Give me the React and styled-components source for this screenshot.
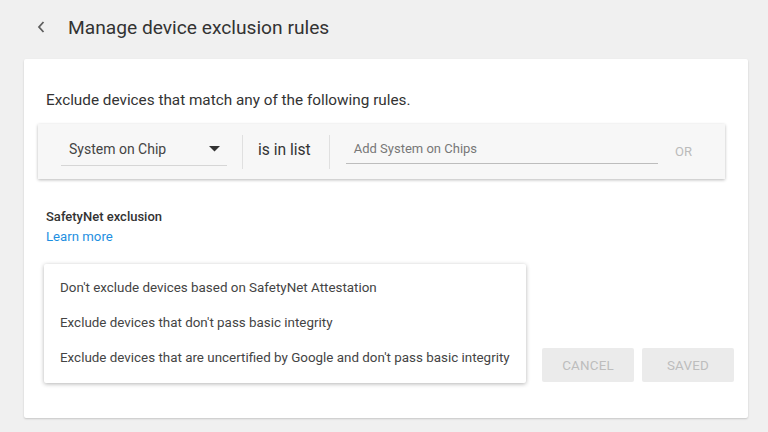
import React from 'react';
import styled, { createGlobalStyle } from 'styled-components';

const GlobalStyle = createGlobalStyle`
  html, body {
    margin: 0;
    padding: 0;
    background: #f0f0f0;
    font-family: Roboto, "Liberation Sans", Arial, sans-serif;
  }
`;

const Page = styled.div`
  width: 768px;
  height: 432px;
  overflow: hidden;
  background: #f0f0f0;
`;

const Header = styled.div`
  display: flex;
  align-items: center;
  height: 54px;
  padding-left: 33px;
`;

const BackButton = styled.button`
  display: flex;
  align-items: center;
  justify-content: center;
  width: 16px;
  height: 20px;
  padding: 0;
  margin: 0 19px 0 0;
  border: none;
  background: transparent;
  color: #555;
`;

const Title = styled.h1`
  margin: 0;
  font-size: 19.2px;
  font-weight: 400;
  color: #333;
`;

const Card = styled.div`
  margin: 5px 20px 0 24px;
  height: 359px;
  background: #fff;
  border-radius: 2px;
  box-shadow: 0 1px 2px rgba(0, 0, 0, 0.18);
  padding: 31px 14px 0 14px;
  box-sizing: border-box;
  display: flex;
  flex-direction: column;
`;

const Intro = styled.p`
  margin: 0 0 14px 8px;
  font-size: 15.3px;
  line-height: 20px;
  color: #333;
`;

const RulePanel = styled.div`
  display: flex;
  align-items: center;
  height: 55px;
  margin-right: 9px;
  background: #f7f7f7;
  box-shadow: 0 1px 3px rgba(0, 0, 0, 0.28);
  padding: 0 33px 0 23px;
`;

const Select = styled.div`
  display: flex;
  align-items: center;
  justify-content: space-between;
  width: 166px;
  height: 33px;
  box-sizing: border-box;
  padding: 0 7px 0 8px;
  margin-bottom: 4px;
  border-bottom: 1px solid #d6d6d6;
  font-size: 14px;
  color: #444;
`;

const Divider = styled.div`
  width: 1px;
  height: 34px;
  margin: 0 15px;
  background: #e0e0e0;
`;

const Operator = styled.span`
  margin: 0 3px 3px 0;
  font-size: 15.6px;
  color: #333;
`;

const Input = styled.div`
  flex: 1;
  height: 31px;
  box-sizing: border-box;
  margin: 0 0 6px 1px;
  padding: 0 8px;
  display: flex;
  align-items: center;
  border-bottom: 1px solid #bdbdbd;
  font-size: 13px;
  color: #777;
`;

const OrLabel = styled.span`
  margin-left: 17px;
  font-size: 13px;
  color: #bbb;
`;

const SectionTitle = styled.div`
  margin: 30px 0 0 8px;
  font-size: 13px;
  line-height: 16px;
  font-weight: 500;
  color: #333;
`;

const Link = styled.a`
  align-self: flex-start;
  margin: 4px 0 0 8px;
  font-size: 13.2px;
  line-height: 16px;
  color: #1e8fe1;
  text-decoration: none;
`;

const Footer = styled.div`
  display: flex;
  align-items: flex-end;
  margin-top: 19px;
`;

const Menu = styled.ul`
  list-style: none;
  margin: 0 0 0 6px;
  padding: 6px 0;
  width: 482px;
  height: 119px;
  box-sizing: border-box;
  background: #fff;
  border-radius: 2px;
  box-shadow: 0 1px 4px rgba(0, 0, 0, 0.3);
`;

const MenuItem = styled.li`
  height: 35px;
  line-height: 35px;
  padding-left: 16px;
  font-size: 13.4px;
  color: #444;
  white-space: nowrap;
`;

const Buttons = styled.div`
  display: flex;
  gap: 8px;
  margin-left: auto;
  margin-bottom: 1px;
`;

const Button = styled.button`
  width: 92px;
  height: 34px;
  border: none;
  border-radius: 2px;
  background: #ebebeb;
  color: #bdbdbd;
  font-family: inherit;
  font-size: 13.4px;
  letter-spacing: 0.2px;
`;

const Chevron = () => (
  <svg width="10" height="14" viewBox="0 0 10 14">
    <path d="M7.5 2 L3 7 L7.5 12" fill="none" stroke="#5f5f5f" strokeWidth="1.8" />
  </svg>
);

const Caret = () => (
  <svg width="11" height="6" viewBox="0 0 11 6">
    <path d="M0 0 L11 0 L5.5 5.5 Z" fill="#333" />
  </svg>
);

const options = [
  "Don't exclude devices based on SafetyNet Attestation",
  "Exclude devices that don't pass basic integrity",
  "Exclude devices that are uncertified by Google and don't pass basic integrity",
];

export default function App() {
  return (
    <Page>
      <GlobalStyle />
      <Header>
        <BackButton aria-label="Back">
          <Chevron />
        </BackButton>
        <Title>Manage device exclusion rules</Title>
      </Header>
      <Card>
        <Intro>Exclude devices that match any of the following rules.</Intro>
        <RulePanel>
          <Select>
            <span>System on Chip</span>
            <Caret />
          </Select>
          <Divider />
          <Operator>is in list</Operator>
          <Divider />
          <Input>Add System on Chips</Input>
          <OrLabel>OR</OrLabel>
        </RulePanel>
        <SectionTitle>SafetyNet exclusion</SectionTitle>
        <Link href="#">Learn more</Link>
        <Footer>
          <Menu>
            {options.map((o, i) => (
              <MenuItem key={`opt-${i}`}>{o}</MenuItem>
            ))}
          </Menu>
          <Buttons>
            <Button disabled>CANCEL</Button>
            <Button disabled>SAVED</Button>
          </Buttons>
        </Footer>
      </Card>
    </Page>
  );
}
